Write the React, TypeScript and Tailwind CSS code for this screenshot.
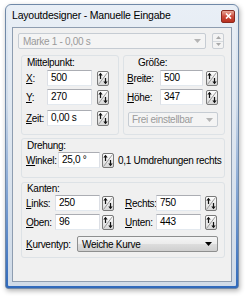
import React from "react";

function U({ children }: { children: React.ReactNode }) {
  return <span className="underline decoration-[1px] underline-offset-[1px]">{children}</span>;
}

function Input({ className, children }: { className: string; children?: React.ReactNode }) {
  return (
    <div
      className={
        "h-[16px] shrink-0 flex items-center bg-white border border-[#abadb3] border-l-[#dcdfe5] border-r-[#dcdfe5] border-b-[#e3e9ef] pl-[3px] leading-none " +
        className
      }
    >
      {children}
    </div>
  );
}

function ResetBtn() {
  return (
    <svg width="12" height="15" viewBox="0 0 12 15" className="shrink-0 block">
      <defs>
        <linearGradient id="rb" x1="0" y1="0" x2="0" y2="1">
          <stop offset="0" stopColor="#ffffff" />
          <stop offset="1" stopColor="#d6d6d6" />
        </linearGradient>
      </defs>
      <rect x="0.5" y="0.5" width="11" height="14" rx="1.5" fill="url(#rb)" stroke="#7a7a7a" />
      <line x1="1.5" y1="13.5" x2="10.5" y2="1.5" stroke="#9c9c9c" />
      <path d="M3.5 1.8 L1.3 4.6 H2.9 V8 H4.1 V4.6 H5.7 Z" fill="#111" />
      <path d="M8.5 13.2 L6.3 10.4 H7.9 V7 H9.1 V10.4 H10.7 Z" fill="#111" />
    </svg>
  );
}

function Arrow({ color }: { color: string }) {
  return (
    <svg width="7" height="4" viewBox="0 0 7 4" className="block">
      <path d="M0 0 H7 L3.5 4 Z" fill={color} />
    </svg>
  );
}

export default function App() {
  return (
    <div className="w-[246px] h-[298px] bg-white pl-[5px] pt-[4px] font-['Liberation_Sans',Arial,sans-serif] text-[10px] tracking-[-0.3px] text-black">
      <div className="w-[234px] h-[285px] flex flex-col rounded-t-[6px] rounded-b-[3px] border border-[#7089a8] bg-[linear-gradient(to_bottom,#e6edf5_0%,#cfdbe9_35%,#2f69bb_100%)] px-[2px] pb-[2px] shadow-[1px_2px_5px_rgba(0,0,0,0.3)]">
        <div className="flex-1 flex flex-col rounded-t-[5px] rounded-b-[1px] bg-[linear-gradient(to_bottom,#e9eff6,#d0dbe8)] px-[4px] pb-[4px]">
          <div className="h-[22px] shrink-0 flex items-center justify-between">
            <span className="text-[10.5px] tracking-[-0.2px] text-black">Layoutdesigner - Manuelle Eingabe</span>
            <div className="-mr-[3px] w-[14px] h-[13px] rounded-[2px] border border-[#8a2a20] bg-[linear-gradient(to_bottom,#e9a899,#cc4b3c_50%,#b8301f)] flex items-center justify-center">
              <svg width="7" height="6" viewBox="0 0 7 6">
                <path d="M1 0.5 L6 5.5 M6 0.5 L1 5.5" stroke="#fff" strokeWidth="1.6" />
              </svg>
            </div>
          </div>

          <div className="flex-1 border border-[#8e9db0] bg-[#f0f0f0] flex flex-col">
            {/* top row */}
            <div className="mt-[5px] ml-[5px] flex items-center gap-[6px]">
              <div className="w-[188px] h-[16px] rounded-[2px] border border-[#c6ccd3] bg-[#f4f4f4] flex items-center justify-between pl-[4px] pr-[4px] text-[#9a9a9a]">
                <span>Marke 1 - 0,00 s</span>
                <Arrow color="#b5b5b5" />
              </div>
              <div className="w-[12px] h-[16px] flex flex-col rounded-[2px] border border-[#c9ced4] bg-[#f3f3f3]">
                <div className="flex-1 flex items-center justify-center border-b border-[#d6dade]">
                  <svg width="5" height="3" viewBox="0 0 5 3"><path d="M0 3 H5 L2.5 0 Z" fill="#a8a8a8" /></svg>
                </div>
                <div className="flex-1 flex items-center justify-center">
                  <svg width="5" height="3" viewBox="0 0 5 3"><path d="M0 0 H5 L2.5 3 Z" fill="#a8a8a8" /></svg>
                </div>
              </div>
            </div>

            {/* Mittelpunkt / Größe */}
            <div className="mt-[6px] ml-[8px] flex gap-[4px]">
              <div className="w-[98px] h-[80px] rounded-[3px] border border-[#dde2e6] flex flex-col">
                <div className="h-[14px] leading-[14px] pl-[5px]">Mittelpunkt:</div>
                <div className="flex items-center pl-[4px]">
                  <span className="w-[21px] shrink-0 whitespace-nowrap"><U>X</U>:</span>
                  <Input className="w-[45px]">500</Input>
                  <div className="ml-[5px]"><ResetBtn /></div>
                </div>
                <div className="mt-[3px] flex items-center pl-[4px]">
                  <span className="w-[21px] shrink-0 whitespace-nowrap"><U>Y</U>:</span>
                  <Input className="w-[45px]">270</Input>
                  <div className="ml-[5px]"><ResetBtn /></div>
                </div>
                <div className="mt-[5px] flex items-center pl-[4px]">
                  <span className="w-[21px] shrink-0 whitespace-nowrap"><U>Z</U>eit:</span>
                  <Input className="w-[45px]">0,00 s</Input>
                  <div className="ml-[5px]"><ResetBtn /></div>
                </div>
              </div>
              <div className="w-[102px] h-[80px] rounded-[3px] border border-[#dde2e6] flex flex-col">
                <div className="h-[14px] leading-[14px] pl-[14px]">Größe:</div>
                <div className="flex items-center pl-[3px]">
                  <span className="w-[33px] shrink-0 whitespace-nowrap"><U>B</U>reite:</span>
                  <Input className="w-[43px]">500</Input>
                  <div className="ml-[3px]"><ResetBtn /></div>
                </div>
                <div className="mt-[3px] flex items-center pl-[3px]">
                  <span className="w-[33px] shrink-0 whitespace-nowrap"><U>H</U>öhe:</span>
                  <Input className="w-[43px]">347</Input>
                  <div className="ml-[3px]"><ResetBtn /></div>
                </div>
                <div className="mt-[7px] ml-[4px] w-[90px] h-[15px] rounded-[2px] border border-[#c6ccd3] bg-[#f4f4f4] flex items-center justify-between pl-[3px] pr-[4px] text-[#9a9a9a]">
                  <span>Frei einstellbar</span>
                  <Arrow color="#b5b5b5" />
                </div>
              </div>
            </div>

            {/* Drehung */}
            <div className="mt-[3px] ml-[8px] w-[204px] h-[40px] rounded-[3px] border border-[#dde2e6] flex flex-col">
              <div className="h-[13px] leading-[13px] pl-[5px]">Drehung:</div>
              <div className="flex items-center pl-[4px]">
                <span className="w-[32px] shrink-0 whitespace-nowrap"><U>W</U>inkel:</span>
                <Input className="w-[42px]">25,0 °</Input>
                <div className="ml-[2px]"><ResetBtn /></div>
                <span className="ml-[4px] shrink-0 whitespace-nowrap">0,1 Umdrehungen rechts</span>
              </div>
            </div>

            {/* Kanten */}
            <div className="mt-[4px] ml-[8px] w-[204px] h-[76px] rounded-[3px] border border-[#dde2e6] flex flex-col">
              <div className="h-[12px] leading-[12px] pl-[5px]">Kanten:</div>
              <div className="flex items-center pl-[4px]">
                <span className="w-[29px] shrink-0 whitespace-nowrap"><U>L</U>inks:</span>
                <Input className="w-[45px]">250</Input>
                <div className="ml-[2px]"><ResetBtn /></div>
                <span className="ml-[11px] w-[31px] shrink-0 whitespace-nowrap"><U>R</U>echts:</span>
                <Input className="w-[45px]">750</Input>
                <div className="ml-[4px]"><ResetBtn /></div>
              </div>
              <div className="mt-[3px] flex items-center pl-[4px]">
                <span className="w-[29px] shrink-0 whitespace-nowrap"><U>O</U>ben:</span>
                <Input className="w-[45px]">96</Input>
                <div className="ml-[2px]"><ResetBtn /></div>
                <span className="ml-[11px] w-[31px] shrink-0 whitespace-nowrap"><U>U</U>nten:</span>
                <Input className="w-[45px]">443</Input>
                <div className="ml-[4px]"><ResetBtn /></div>
              </div>
              <div className="mt-[6px] flex items-center pl-[4px]">
                <span className="w-[51px] shrink-0 whitespace-nowrap"><U>K</U>urventyp:</span>
                <div className="w-[141px] h-[16px] rounded-[2px] border border-[#8e8f8f] bg-[linear-gradient(to_bottom,#f5f5f5_0%,#ebebeb_50%,#dddddd_51%,#cfcfcf_100%)] flex items-center justify-between pl-[4px] pr-[5px]">
                  <span>Weiche Kurve</span>
                  <Arrow color="#000" />
                </div>
              </div>
            </div>
          </div>
        </div>
      </div>
    </div>
  );
}
